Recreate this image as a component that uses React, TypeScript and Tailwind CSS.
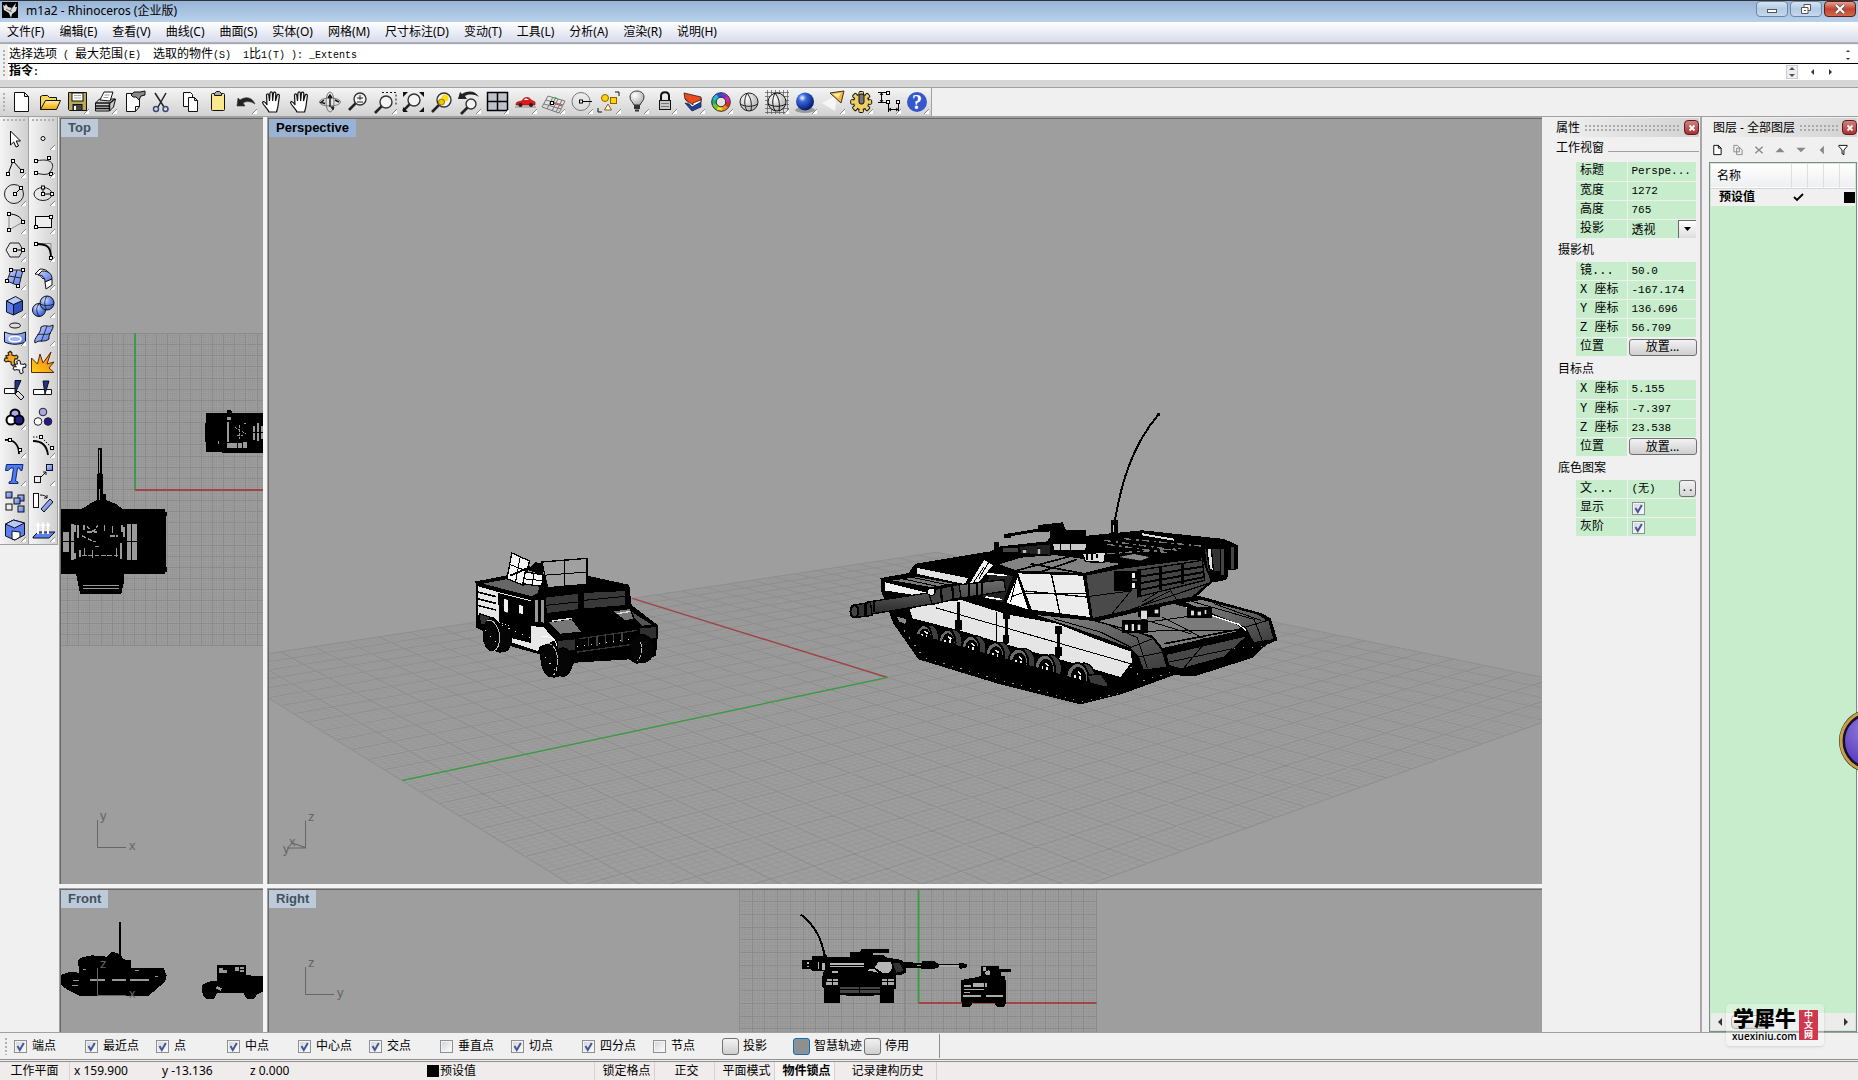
import React, { useState } from "react";

type Pt = { x: number; y: number };

/* ---------- small shared drawing pieces ---------- */

const Node = ({ x, y }: Pt) => (
  <rect x={x - 1.5} y={y - 1.5} width="3" height="3" fill="#fff" stroke="#000" strokeWidth="1" />
);

const Flyout = () => (
  <g>
    <path d="M26 21v5h-5z" fill="#fff" />
    <path d="M26 21l-5 5" stroke="#8a8a8a" strokeWidth="1" />
  </g>
);

const Defs = () => (
  <svg className="absolute size-0" aria-hidden="true">
    <defs>
      <linearGradient id="blue" x1="0" y1="0" x2="1" y2="1">
        <stop offset="0" stopColor="#c3d3ff" />
        <stop offset="1" stopColor="#4f72e8" />
      </linearGradient>
      <radialGradient id="ball" cx=".35" cy=".3" r=".8">
        <stop offset="0" stopColor="#dfe8ff" />
        <stop offset=".4" stopColor="#7d9cf5" />
        <stop offset="1" stopColor="#2c4fc0" />
      </radialGradient>
      <radialGradient id="navy" cx=".35" cy=".3" r=".7">
        <stop offset="0" stopColor="#fff" />
        <stop offset=".3" stopColor="#3a6be0" />
        <stop offset="1" stopColor="#031a70" />
      </radialGradient>
      <radialGradient id="glass" cx=".35" cy=".3" r=".8">
        <stop offset="0" stopColor="#fff" />
        <stop offset="1" stopColor="#a9a9a9" />
      </radialGradient>
      <linearGradient id="gold" x1="0" y1="0" x2="0" y2="1">
        <stop offset="0" stopColor="#ffef9c" />
        <stop offset="1" stopColor="#f2a400" />
      </linearGradient>
      <linearGradient id="flame" x1="1" y1="0" x2="0" y2="1">
        <stop offset="0" stopColor="#f07010" />
        <stop offset="1" stopColor="#ffd21a" />
      </linearGradient>
      <linearGradient id="barrel" x1="0" y1="0" x2="0" y2="1">
        <stop offset="0" stopColor="#6e6e6e" />
        <stop offset="1" stopColor="#2a2a2a" />
      </linearGradient>
      <linearGradient id="fender" x1="0" y1="0" x2="1" y2="1">
        <stop offset="0" stopColor="#8a8a8a" />
        <stop offset="1" stopColor="#3b3b3b" />
      </linearGradient>
      <radialGradient id="orb" cx=".4" cy=".3" r=".8">
        <stop offset="0" stopColor="#8f7bd8" />
        <stop offset="1" stopColor="#4a2cb8" />
      </radialGradient>
    </defs>
  </svg>
);

const K = "#111";
const Hand = (
  <path
    d="M10 24C9 21 4 17 3.5 14.500c.5-1.500 2.500-1 4 1.500L8 17 7.500 7c.3-1.500 2-1.500 2.300 0l.7 6L11 5c.3-1.500 2.200-1.500 2.400 0l.2 8 .9-8c.4-1.400 2.200-1.200 2.300.2L16.500 13l1.700-6c.6-1.200 2.300-.7 2.200.7L19 18c-.5 3-1 4-1.500 6z"
    fill="#fff"
    stroke={K}
    strokeWidth="1.200"
  />
);
const lens = (cx: number, cy: number, r: number, fill = "#f4f4f4") => (
  <g>
    <path d={`M${cx - r * 0.7} ${cy + r * 0.7}L${cx - r - 5} ${cy + r + 5}`} stroke="#222" strokeWidth="2.600" />
    <circle cx={cx} cy={cy} r={r} fill={fill} stroke="#333" strokeWidth="1.400" />
  </g>
);

type Tool = { name: string; fly?: boolean; art: React.ReactNode };

const teeth = [0, 45, 90, 135, 180, 225, 270, 315];

const topTools: Tool[] = [
  { name: "新建", art: <path d="M7.500 4.500h10l4 4v15h-14zM17.500 4.500v4h4" fill="#fff" stroke={K} /> },
  {
    name: "打开",
    art: (
      <g stroke={K}>
        <path d="M5.500 21.500V8.500l2-1h5l2 2h7v4" fill="#f6d75e" />
        <path d="M5.500 21.500l5-9h15l-4 9z" fill="url(#gold)" />
      </g>
    ),
  },
  {
    name: "保存",
    fly: true,
    art: (
      <g stroke={K}>
        <path d="M5.500 4.500h18v18h-17l-1-1z" fill="#b9a955" />
        <rect x="9" y="5" width="11" height="8" fill="#fff" />
        <path d="M11 7.500h7M11 10h7" stroke="#aaa" />
        <rect x="10" y="16.500" width="9" height="6" fill="#444" />
        <path d="M12 18v4" stroke="#fff" strokeWidth="2" />
      </g>
    ),
  },
  {
    name: "打印",
    fly: true,
    art: (
      <g stroke={K}>
        <path d="M4.500 15l4-4h16l-2 8-4 4h-14z" fill="#ccc" />
        <path d="M9 12l4-8h9l-3 9z" fill="#fff" />
        <path d="M4.500 15h14v8M5 18h13M5 20.500h13M19 15l5-4" fill="none" strokeWidth="1.500" />
        <path d="M13.500 7h5M12.500 9.500h5" stroke="#999" />
      </g>
    ),
  },
  {
    name: "文件属性",
    art: (
      <g stroke={K}>
        <path d="M7.500 5.500h13v13l-4 5h-9zM16.500 23.500v-5h4" fill="#fff" />
        <path d="M12 7l3-3h6l5-1v4l-4 1-2 4-3-3h-3z" fill="#8a8a8a" />
      </g>
    ),
  },
  {
    name: "剪切",
    art: (
      <g fill="none" stroke="#222" strokeWidth="1.500">
        <path d="M8 5l9 14M19 5l-8 14" />
        <circle cx="9" cy="21" r="2.500" stroke="#3d4878" />
        <circle cx="18.500" cy="21" r="2.500" stroke="#3d4878" />
      </g>
    ),
  },
  {
    name: "复制",
    art: (
      <g fill="#fff" stroke={K}>
        <path d="M8.500 4.500h7l2 2v12h-9z" />
        <path d="M13.500 9.500h6l3 3v11h-9zM19.500 9.500v3h3" />
      </g>
    ),
  },
  {
    name: "粘贴",
    art: (
      <g stroke={K}>
        <rect x="8.500" y="5.500" width="13" height="17" rx="1" fill="#fae98c" />
        <path d="M11.500 7.500v-2l2-2h3l2 2v2z" fill="#aaa" />
      </g>
    ),
  },
  { name: "撤销", fly: true, art: <path d="M6 18l1-8 2 2c6-4 12-3 15 4-5-3-8-3-12-1l2 3z" fill="#222" stroke="#333" strokeWidth=".6" /> },
  { name: "平移", art: Hand },
  { name: "平移视图", art: Hand },
  {
    name: "旋转视图",
    art: (
      <g fill="none" stroke="#777" strokeWidth="1">
        <ellipse cx="15" cy="14" rx="10.500" ry="4" />
        <ellipse cx="15" cy="14" rx="4" ry="10" />
        <path d="M15 8v11M13 10l2-3 2 3M9 12l-3 2.500 4 1M20 12l4 2" stroke="#111" strokeWidth="1.400" />
        <path d="M16 19l3 0-1 3z" fill="#222" stroke="#222" />
      </g>
    ),
  },
  { name: "动态缩放", art: <g>{lens(17, 11, 6)}<path d="M14 10h6M17 7v5M14 14h6" stroke="#222" /></g> },
  { name: "框选缩放", fly: true, art: <g>{lens(15, 14, 6)}<path d="M11 4.500h14v13" fill="none" stroke="#111" strokeDasharray="2 2" /></g> },
  {
    name: "缩放至范围",
    art: <g>{lens(15, 12, 6)}<path d="M4 4h5l-5 5zM25 4h-5l5 5zM4 24v-5l5 5zM25 24v-5l-5 5z" fill="#111" /></g>,
  },
  { name: "缩放选取物件", art: <g>{lens(17, 12, 7)}<circle cx="18" cy="10" r="3.500" fill="#ffdb10" /><circle cx="14.500" cy="14" r="3" fill="#f4c600" stroke="#967800" /></g> },
  { name: "复原视图", fly: true, art: <g>{lens(16, 16, 5)}<path d="M3 11l2-7 2 2c7-4 13-3 17 3-5-3-10-3-14-1l2 3z" fill="#222" /></g> },
  { name: "四个视图", fly: true, art: <path d="M4.500 4.500h20v18h-20zM14.500 4.500v18M4.500 13.500h20" fill="#bfc1cb" stroke="#000" strokeWidth="1.500" /> },
  {
    name: "右视图",
    fly: true,
    art: (
      <g>
        <path d="M4 19h21" stroke="#888" />
        <path d="M5 17c0-4 3-3 6-4 2-5 8-4 9-1l4 2v3z" fill="#e01818" stroke="#9c0d0d" strokeWidth=".7" />
        <path d="M13 12c1-2 3-2 5 0z" fill="#fff" />
        <circle cx="9.500" cy="17" r="2" fill="#222" /><circle cx="20" cy="17" r="2" fill="#222" />
      </g>
    ),
  },
  {
    name: "工作平面",
    fly: true,
    art: (
      <g stroke="#777" fill="none">
        <path d="M9 8l17 5-6 12-17-6zM14 9l-6 12M19 11l-6 12M23 12l-6 12M7 12l17 5M5 16l17 5" />
        <path d="M14 15l3-6" stroke="#1ba51b" /><path d="M14 15l9 3" stroke="#d33" /><Node x={13} y={15} />
      </g>
    ),
  },
  { name: "设置点", fly: true, art: <g fill="none"><circle cx="14" cy="13.500" r="9" stroke="#777" /><path d="M14 13.500h11" stroke="#000" /><Node x={14} y={13.5} /></g> },
  {
    name: "选取",
    fly: true,
    art: (
      <g stroke="#8a6400">
        <circle cx="10" cy="10" r="3.500" fill="#ffd400" /><rect x="15.500" y="9.500" width="6" height="6" fill="#ffd400" />
        <path d="M13 16l3.500 6h-7z" fill="#fff" /><path d="M20 4h4v4M3 20v4h4" fill="none" stroke="#111" />
      </g>
    ),
  },
  {
    name: "隐藏",
    fly: true,
    art: (
      <g stroke="#333">
        <path d="M11 17c-1-3-4-4-4-8 0-8 14-8 14 0 0 4-3 5-4 8z" fill="url(#glass)" />
        <path d="M11 18h6M11 20h6M12 22.500h4" strokeWidth="2" />
      </g>
    ),
  },
  {
    name: "锁定",
    fly: true,
    art: (
      <g stroke={K}>
        <path d="M10 13V8c0-5 8-5 8 0v5" fill="none" strokeWidth="2" />
        <rect x="8.500" y="12.500" width="11" height="9" fill="#c8c8c8" /><path d="M10 15.500h8M10 18.500h8" stroke="#777" />
      </g>
    ),
  },
  {
    name: "图层",
    fly: true,
    art: (
      <g stroke="#222" strokeWidth=".8">
        <path d="M6 15l7 8 9-4v-8l-9 6z" fill="#1d3fa8" /><path d="M6 11l7 8 9-5v-4l-9 5z" fill="#fff" />
        <path d="M5 5l17 4v3l-8 3v2l-8-6z" fill="#ef4a1b" />
      </g>
    ),
  },
  {
    name: "物件颜色",
    fly: true,
    art: (
      <g fill="none" strokeWidth="4">
        {["#e62222", "#f58a12", "#f2dd12", "#74c91b", "#1fae75", "#1abce0", "#2352dd", "#8b22cc", "#e01fa4"].map((c, i) => (
          <circle key={c} cx="14" cy="14" r="7" stroke={c} pathLength="90" strokeDasharray="10.500 79.500" strokeDashoffset={-i * 10} />
        ))}
        <circle cx="14" cy="14" r="9.300" stroke="#222" strokeWidth="1" /><circle cx="14" cy="14" r="4.800" stroke="#222" strokeWidth="1" />
      </g>
    ),
  },
  {
    name: "着色",
    art: (
      <g stroke="#222" fill="none">
        <circle cx="14" cy="14" r="9" fill="url(#glass)" /><path d="M12 5c-3 6-3 12 0 18M5 16c5 3 13 3 18 0M12 5c4 5 5 10 4 18" />
      </g>
    ),
  },
  {
    name: "着色全部",
    fly: true,
    art: (
      <g stroke="#555" fill="none">
        <path d="M2 4.500h24M2 8.500h24M2 12.500h24M2 16.500h24M2 20.500h24M2 24.500h24M4.500 2v24M8.500 2v24M12.500 2v24M16.500 2v24M20.500 2v24M24.500 2v24" strokeWidth=".7" />
        <circle cx="14" cy="14" r="9" fill="url(#glass)" stroke="#111" /><path d="M12 5c-3 6-3 12 0 18M5 16c5 3 13 3 18 0M12 5c4 5 5 10 4 18" stroke="#111" />
      </g>
    ),
  },
  { name: "渲染", fly: true, art: <g><ellipse cx="14" cy="22" rx="10" ry="3" fill="#999" /><circle cx="14" cy="13.500" r="9" fill="url(#navy)" /></g> },
  { name: "灯光", fly: true, art: <g><path d="M18 7L3 15l13 8z" fill="#fff" opacity=".7" /><path d="M11 5l14-2-3 12z" fill="#ffb52e" stroke="#333" /><path d="M14 6l8-1-3 5z" fill="#fff2b0" /></g> },
  {
    name: "选项",
    fly: true,
    art: (
      <g stroke="#111">
        {teeth.map((a) => <rect key={a} x="12" y="3.500" width="4.500" height="5" rx="1" fill="#efcf63" transform={`rotate(${a} 14.200 14)`} />)}
        <circle cx="14.200" cy="14" r="8" fill="#111" stroke="none" />
        {teeth.map((a) => <rect key={a} x="12.700" y="4.500" width="3" height="5" fill="#efcf63" stroke="none" transform={`rotate(${a} 14.200 14)`} />)}
        <circle cx="14.200" cy="14" r="7.200" fill="#efcf63" stroke="none" />
        <rect x="12" y="6" width="5" height="10" rx="2" fill="#777" />
      </g>
    ),
  },
  {
    name: "尺寸",
    fly: true,
    art: (
      <g fill="none" stroke="#000">
        <path d="M3 4.500h10M3 14.500h10M6.500 5v9M13.500 14v10M23.500 14v10M14 21.500h9M5 7l1.500-2L8 7M5 12l1.500 2L8 12M16 20l-2 1.500 2 1.500M21 20l2 1.500-2 1.500" />
        <Node x={13} y={5} /><Node x={13} y={14} /><Node x={23} y={14} />
      </g>
    ),
  },
  {
    name: "帮助",
    fly: true,
    art: (
      <g>
        <circle cx="14" cy="14" r="10" fill="#3557cc" />
        <text x="14" y="21" textAnchor="middle" fontSize="20" fontWeight="bold" fill="#fff" fontFamily="Liberation Serif, serif">?</text>
      </g>
    ),
  },
];

const puzzle = "M5 9l4-1-1-3 3-2 2 2v3l4 1 2-1 2 2-1 3-3 0-1 4 1 3-3 2-2-2v-3l-4-1-3 1-2-2 1-3 3 0z";

const leftA: Tool[] = [
  { name: "取消选取", art: <path d="M10.500 7v14l3.200-3 2.300 5 2.500-1-2.300-5h4.300z" fill="#fff" stroke="#000" /> },
  { name: "多重直线", fly: true, art: <g stroke="#000"><path d="M8 22l5-13 9 10" fill="none" /><Node x={8} y={22} /><Node x={13} y={9} /><Node x={22} y={19} /></g> },
  { name: "圆", fly: true, art: <g><circle cx="14" cy="14" r="9.500" fill="none" stroke="#222" /><path d="M15 14l6-6" stroke="#000" /><Node x={15} y={14} /><Node x={21} y={8} /></g> },
  { name: "圆弧", fly: true, art: <g fill="none"><path d="M9 22V6M9 22l14-8" stroke="#888" /><path d="M9 6c7 0 12 3 14 8" stroke="#000" /><Node x={9} y={6} /><Node x={9} y={22} /><Node x={23} y={14} /></g> },
  { name: "多边形", fly: true, art: <g><path d="M6 14l4-7h9l4 7-4 7h-9z" fill="none" stroke="#222" /><path d="M15 14h8" stroke="#000" /><Node x={15} y={14} /><Node x={23} y={14} /></g> },
  { name: "曲面", fly: true, art: <g stroke="#222"><path d="M11 6l12 0-4 16-12-5z" fill="url(#blue)" /><path d="M17 6l-4 14M9 12l12 2" /><Node x={11} y={6} /><Node x={23} y={6} /><Node x={7} y={17} /><Node x={18} y={22} /></g> },
  { name: "立方体", fly: true, art: <g stroke="#111"><path d="M6.500 9l7 3.500V23l-7-3z" fill="#5c80f2" /><path d="M13.500 12.500l9-4v10l-9 4.500z" fill="#2f50bd" /><path d="M6.500 9l9-4.500 7 4-9 4z" fill="#b5c8ff" /></g> },
  { name: "从物件建立曲线", fly: true, art: <g stroke="#111"><ellipse cx="15" cy="5.500" rx="5.500" ry="2.500" fill="#ddd" /><path d="M4.500 12c7 3 14 3 21 0v10c-7 3-14 3-21 0z" fill="url(#blue)" /><ellipse cx="15" cy="19" rx="6" ry="2.800" fill="#9fb7ff" stroke="#fff" strokeWidth="1.500" /></g> },
  { name: "组合", art: <g strokeWidth="1.500" stroke="#222"><path d={puzzle} fill="#fff" transform="translate(11 10) scale(.72)" /><path d={puzzle} fill="#f7a81b" transform="translate(2 1) scale(.76)" /></g> },
  { name: "修剪", art: <g stroke="#111"><path d="M4.500 12.500h12v5h-12z" fill="#fff" /><path d="M15 4.500h6l-6 13z" fill="#1b348c" /><path d="M15 18l3-3 6 6-3 3z" fill="#ddd" /></g> },
  { name: "群组", fly: true, art: <g stroke="#000" strokeWidth="2"><circle cx="15" cy="10" r="4.500" fill="#aaa6f0" /><circle cx="11" cy="16" r="4.500" fill="#fff" /><circle cx="19" cy="16" r="4.500" fill="#201c87" /></g> },
  { name: "编辑点", fly: true, art: <g><path d="M5 8c9-1 14 5 14 14" fill="none" stroke="#000" strokeWidth="1.800" /><Node x={10} y={8} /><Node x={20} y={18} /></g> },
  { name: "文字", fly: true, art: <path d="M6.500 4.500h16.500l-1 6h-1.500l-1-2.500h-2l-2 13 2.500 1v1.500h-9V22l2.500-1 2-13h-2.500L8 10.500H5.500z" fill="#4f7bee" stroke="#102878" /> },
  { name: "阵列", art: <g stroke="#111" fill="url(#blue)"><rect x="6" y="4" width="6" height="6" /><rect x="18" y="7" width="6" height="6" /><rect x="14" y="10" width="6" height="6" /><rect x="18" y="18" width="6" height="6" /><rect x="6" y="16" width="6" height="6" fill="#eee" /></g> },
  { name: "实体编辑", fly: true, art: <g stroke="#111"><path d="M5.500 8l8-4 11 3v12l-10 5-9-4z" fill="#5c80f2" /><path d="M5.500 8l8-4 11 3-10 5z" fill="#b5c8ff" /><path d="M12 15l8 1v5l-5 3-3-1z" fill="#fff" /></g> },
];

const leftB: Tool[] = [
  { name: "点", fly: true, art: <circle cx="14" cy="14.500" r="2" fill="#fff" stroke="#000" /> },
  { name: "曲线", fly: true, art: <g><path d="M7 9c17-4 21 5 12 13-4 1-8 0-12-1" fill="none" stroke="#222" /><Node x={7} y={9} /><Node x={7} y={21} /><Node x={20} y={6} /><Node x={22} y={22} /></g> },
  { name: "椭圆", fly: true, art: <g><ellipse cx="14" cy="14" rx="9" ry="6.500" fill="none" stroke="#222" /><path d="M14 14h9M14 14V8" stroke="#000" /><Node x={14} y={14} /><Node x={14} y={7.5} /><Node x={23} y={14} /></g> },
  { name: "矩形", fly: true, art: <g><rect x="6.500" y="8.500" width="16" height="11" fill="#eee" stroke="#000" /><Node x={22} y={9} /><Node x={7} y={19} /></g> },
  { name: "圆角", fly: true, art: <g fill="none"><path d="M7 7.500h15v15" stroke="#888" /><path d="M7 8c12 0 15 3 15 15" stroke="#000" strokeWidth="1.800" /><Node x={7} y={8} /><Node x={22} y={22} /></g> },
  { name: "曲面圆角", fly: true, art: <g stroke="#111"><path d="M6 10l5-5c4 0 7 1 9 4l-6 6c-2-3-4-5-8-5z" fill="#fff" /><path d="M13 7c7 0 10 3 10 8l-7 3c0-5-3-7-7-7z" fill="url(#blue)" /><path d="M16 18l7-3v6l-6 4z" fill="#fff" /></g> },
  { name: "布尔运算", fly: true, art: <g stroke="#111"><circle cx="10" cy="18" r="6.500" fill="url(#ball)" /><circle cx="18" cy="11" r="7" fill="url(#ball)" /><path d="M18 4c-3 4-3 10 0 14M11 12c4 2 10 2 14 0M10 12c-3 3-3 8 0 12" fill="none" strokeWidth=".8" /></g> },
  { name: "网格", fly: true, art: <g stroke="#111"><path d="M12 7c5-3 7 1 12-2 1 5-5 8-4 14-5 4-9 0-14 4-2-5 6-9 6-16z" fill="url(#blue)" /><path d="M8 15c5-2 8 1 14-2M18 6l-6 16" fill="none" strokeWidth=".8" /></g> },
  { name: "炸开", art: <path d="M2.500 24.500V10l6 6L11 6l3 9 8-11-4 12 7-2-5 6 5 4.500z" fill="url(#flame)" stroke="#5b2c00" /> },
  { name: "分割", art: <g stroke="#111"><path d="M4.500 13.500h18v5h-18z" fill="#fff" /><path d="M14 5h6l-4 13z" fill="#1b348c" /></g> },
  { name: "解散群组", art: <g stroke="#222"><circle cx="14" cy="8" r="3.800" fill="#aaa6f0" /><circle cx="9" cy="17.500" r="3.800" fill="#fff" /><circle cx="19" cy="17.500" r="3.800" fill="#201c87" /></g> },
  { name: "控制点", fly: true, art: <g fill="none"><path d="M4 5h8l12 12" stroke="#000" strokeDasharray="1.500 1.500" /><path d="M4 9c10 0 14 5 15 14" stroke="#000" strokeWidth="1.800" /><Node x={12} y={5} /><Node x={23} y={16} /></g> },
  { name: "移动", fly: true, art: <g stroke="#111"><path d="M12 17l5-5M14 12h3v3" fill="none" /><rect x="5.500" y="16.500" width="6" height="6" fill="#eee" /><rect x="17.500" y="4.500" width="6" height="6" fill="url(#blue)" /></g> },
  { name: "对齐", art: <g stroke="#111"><rect x="4.500" y="5.500" width="5" height="14" fill="#fff" /><path d="M12 21l9-10 3 3-9 10z" fill="url(#blue)" /><path d="M11 7c4 0 6 1 7 3M15 10h3v-3" fill="none" /></g> },
  { name: "分析方向", fly: true, art: <g><path d="M4 21l5-5h17l-6 6H4z" fill="#5c80f2" stroke="#111" /><path d="M9 18V9M14 18V9M19 18V9" stroke="#fff" strokeWidth="2" /><path d="M6.500 10L9 6l2.500 4zM11.500 10L14 6l2.500 4zM16.500 10L19 6l2.500 4z" fill="#fff" /></g> },
];

const ToolButton = ({ tool }: { tool: Tool }) => (
  <button type="button" aria-label={tool.name} className="size-7 shrink-0 hover:bg-white/60">
    <svg viewBox="0 0 28 28" className="block size-7">
      {tool.art}
      {tool.fly && <Flyout />}
    </svg>
  </button>
);

/* ---------- viewports ---------- */

const flatGrid = (cx: number, cy: number, half: number, major: boolean) => {
  let d = "";
  for (let i = -70; i <= 70; i++) {
    if ((i % 5 === 0) !== major) continue;
    const o = Math.round((i * half) / 70);
    d += `M${cx + o + 0.5} ${cy - half}V${cy + half}M${cx - half} ${cy + o + 0.5}H${cx + half}`;
  }
  return d;
};

const FlatGrid = ({ cx, cy, half }: { cx: number; cy: number; half: number }) => (
  <g fill="none" strokeWidth="1" shapeRendering="crispEdges">
    <path d={flatGrid(cx, cy, half, false)} stroke="#979797" />
    <path d={flatGrid(cx, cy, half, true)} stroke="#8b8b8b" />
  </g>
);

/* maps a construction-plane point (-1..1) to the perspective view */
const project = (u: number, v: number) => {
  const w = 0.2419 * u - 0.2012 * v + 1;
  return `${((-102.1 * u - 565.9 * v + 887) / w).toFixed(1)} ${((65.7 * u - 53.9 * v + 677) / w).toFixed(1)}`;
};
const planeGrid = (major: boolean) => {
  let d = "";
  for (let i = -70; i <= 70; i++) {
    if ((i % 5 === 0) !== major) continue;
    const t = i / 70;
    d += `M${project(t, -1)}L${project(t, 1)}M${project(-1, t)}L${project(1, t)}`;
  }
  return d;
};

const Axes = ({ x, y, up, side }: { x: number; y: number; up: string; side: string }) => (
  <g fontFamily="Liberation Sans, sans-serif" fontSize="13" fill="#666">
    <path d={`M${x + 0.5} ${y - 27}V${y + 0.5}H${x + 29}`} fill="none" stroke="#666" />
    <text x={x + 3} y={y - 27}>{up}</text>
    <text x={x + 32} y={y + 3}>{side}</text>
  </g>
);

const Humvee = () => (
  <g transform="translate(460 530) scale(.33333)" stroke="#000" strokeWidth="4" shapeRendering="crispEdges">
    <path d="M48 155L140 137 390 140 505 165 512 225 590 285V322L585 375 530 398 505 385 340 395 325 430 280 440 245 400 240 370 150 345 120 365 90 355 70 300 50 290z" fill="#000" />
    <path d="M60 160L150 142 240 165 235 190 215 200z" fill="#666" />
    <path d="M52 165L110 182 215 208 212 250 185 270 150 290 105 275 95 262 52 255z" fill="#e6e6e6" />
    <path d="M52 185l56 14M52 205l56 14M52 225l56 14" strokeWidth="5" />
    <path d="M115 190l95 24v90l-90-30z" fill="#000" />
    <path d="M130 204l14 4v40l-14-4zM175 222l14 4v26l-14-3z" fill="#f2f2f2" strokeWidth="2" />
    <path d="M58 250l44 14-8 20-34 0z" fill="#333" />
    <path d="M130 315L210 335 212 285 250 288 290 330 240 350 235 365 130 330z" fill="#e8e8e8" />
    <path d="M222 208l12 0v70l-12 0zM240 208l12 0v72l-12-4z" fill="#999" />
    <path d="M255 200L355 188V238L258 250zM368 186L496 180V226L370 236z" fill="#383838" />
    <path d="M255 225l98-10M370 210l125-12" strokeWidth="3" />
    <path d="M155 68L208 92 190 165 140 145z" fill="#f4f4f4" />
    <path d="M150 103L200 122M180 80l-14 75" strokeWidth="3" />
    <path d="M195 125L248 133 245 168 188 160z" fill="#f4f4f4" /><path d="M190 145l56 6M220 128l-3 36" strokeWidth="3" />
    <path d="M245 95L380 84V162L262 172z" fill="#a0a0a0" /><path d="M248 135l132-10M313 90v76" strokeWidth="3" />
    <path d="M150 136l60-26" strokeWidth="6" /><path d="M205 118l20-20 22 2v32z" fill="#000" />
    <path d="M262 275L335 265 365 305 300 312zM455 242L510 234 535 262 495 272z" fill="#777" />
    <path d="M275 272l60-8M470 250l40-7" stroke="#ddd" />
    <path d="M512 240L580 285 545 288 520 262z" fill="#555" />
    <path d="M290 330L345 325V360L290 368zM538 292L588 288V325L538 330z" fill="#303030" />
    <path d="M355 325L530 300M350 365l180-25" stroke="#333" />
    <path d="M385 320v28M410 316v30M435 312v30M460 310v28M485 306v28" stroke="#444" strokeWidth="4" />
    <ellipse cx="95" cy="312" rx="26" ry="48" fill="#050505" /><ellipse cx="130" cy="325" rx="24" ry="38" fill="#050505" />
    <ellipse cx="272" cy="388" rx="28" ry="50" fill="#050505" /><ellipse cx="308" cy="395" rx="28" ry="42" fill="#050505" /><ellipse cx="545" cy="355" rx="36" ry="42" fill="#050505" />
    <g fill="none" stroke="#bbb" strokeWidth="3">
      <path d="M80 270c20-6 38 22 38 50s-8 38-16 40" /><path d="M260 340c20-4 34 28 32 56s-8 36-14 38" strokeDasharray="16 5" /><path d="M540 335c8 20 4 45-8 56" strokeDasharray="14 5" />
      <path d="M245 320c28-4 42 6 44 26" stroke="#fff" />
    </g>
    <g stroke="#ddd" strokeWidth="3" strokeDasharray="3 19"><path d="M125 285l90 38M255 380l30 40M350 350l160-24M75 300l36 40" /></g>
  </g>
);

const wheels = [[250, 710, 24, 36], [320, 726, 25, 38], [390, 746, 27, 39], [463, 767, 28, 41], [533, 787, 30, 42], [612, 806, 31, 43], [710, 832, 33, 44]];

const Tank = () => (
  <g transform="translate(840 400) scale(.33333)" stroke="#000" strokeWidth="4" shapeRendering="crispEdges">
    <path d="M122 535L205 520 225 492 450 455 480 440 620 425 640 400 740 408 905 392 1150 418 1190 437V505L1158 508 1155 537 1112 545 1062 590 1080 590 1260 640 1288 655 1308 718 1275 732 1235 770 1060 826 1000 822 840 880 720 910 480 850 235 775 160 668 150 640 125 575z" fill="#000" />
    <path d="M228 500L385 532 375 554 228 522z" fill="#e2e2e2" />
    <path d="M145 540L230 528 350 550 270 562z" fill="#7a7a7a" /><path d="M180 534l120 26M210 530l115 24" strokeWidth="3" />
    <path d="M130 543L265 576 235 588 132 572z" fill="#efefef" />
    <path d="M205 625L300 600 365 598 500 640 650 668 760 712 872 752 876 785 840 832 655 778 500 735 350 690 215 656z" fill="#e5e5e5" />
    <path d="M285 622L870 790M468 635v90" fill="none" strokeWidth="3" />
    <g strokeWidth="9"><path d="M355 605v85M498 640v90M653 680v92" /></g>
    <g strokeWidth="20"><path d="M353 660v30M498 636v20M496 705v22M654 678v22M653 740v28" /></g>
    <path d="M570 640L760 660 860 682 935 712 962 745 980 800 908 810 893 770 870 745 760 704z" fill="url(#fender)" />
    <path d="M640 655l140 40 90 45M800 672l90 40 30 90M860 745l75-30M893 770l70-14" fill="none" strokeWidth="3" />
    <path d="M765 662L1000 608 1185 668 1210 690 965 745 935 708z" fill="#7b7b7b" />
    <path d="M920 692L1215 690M850 675L1100 640M965 650l140 72M900 655l150 45M980 760L1222 702" fill="none" strokeWidth="3" />
    <path d="M970 730L1210 684M970 745L1215 695" strokeWidth="5" />
    <path d="M975 762L1222 705 1150 770 1020 806 985 796z" fill="#474747" /><path d="M985 785L1175 745M1090 730l-60 72" strokeWidth="3" />
    <path d="M1025 604L1085 597 1250 640 1285 662 1300 718 1238 727 1215 682z" fill="url(#fender)" /><path d="M1050 602l190 55 25 65M1120 610l140 50M1215 680l65-20" fill="none" strokeWidth="3" />
    <path d="M1035 620L1195 672 1215 690" fill="none" stroke="#fff" />
    <path d="M845 662h75v34h-75zM1042 622h70v28h-70zM895 622h62v26h-62z" fill="#000" />
    <path d="M900 630h20v26h-20zM940 626h14v14h-14zM852 672h10v18h-10zM872 670h8v22h-8zM890 672h10v18h-10zM1050 630h10v16h-10zM1070 632h12v14h-12zM1090 628h8v14h-8z" fill="#ddd" strokeWidth="2" />
    <path d="M470 492L540 470 640 462 850 490 730 520 530 513z" fill="#838383" />
    <path d="M530 510L700 465M600 515l110-38M570 490l160 30" fill="none" strokeWidth="5" />
    <path d="M735 524L830 505 1085 472 1112 542 1055 590 880 627 755 655z" fill="#4a4a4a" />
    <path d="M745 588L870 572M810 645L870 572M870 627L1100 550M905 605l95-60M880 627l110-56 20 30" fill="none" strokeWidth="3" />
    <path d="M890 510L1085 480 1092 540 890 590z" fill="#444" />
    <path d="M845 490L1080 475M890 530L1090 498M890 550L1090 515M890 570L1090 530" strokeWidth="6" /><path d="M960 500v70M1025 490v62M895 505v85" strokeWidth="10" />
    <path d="M822 515h50v55h-50z" fill="#000" /><path d="M872 515h14v20h-14zM872 545h14v20h-14z" fill="#eee" />
    <path d="M530 517L728 524 750 652 572 630z" fill="#ececec" /><path d="M555 572L740 590M555 580L740 580M632 520l26 120" fill="none" strokeWidth="4" />
    <path d="M530 523L495 608 565 630z" fill="#fff" /><path d="M510 590l50-18M530 525l-20 80" strokeWidth="3" />
    <path d="M430 476L460 494 415 548 385 550z" fill="#eee" /><path d="M430 500l-30 45M445 485l-30 50" strokeWidth="3" />
    <path d="M450 515L520 525 488 608 420 590z" fill="#222" /><path d="M440 520l60 6M435 590l50 8" stroke="#fff" strokeWidth="5" />
    <path d="M75 606L260 578 355 553 490 538 495 572 370 592 268 612 92 641z" fill="url(#barrel)" />
    <path d="M262 572L355 552 362 592 275 612z" fill="#444" /><path d="M410 545v48M425 543v48M100 605v30M300 563l5 42M335 558l4 42M385 550v44" strokeWidth="7" />
    <ellipse cx="272" cy="574" rx="12" ry="11" fill="#eee" />
    <path d="M35 615L90 606 95 645 40 652z" fill="#333" /><ellipse cx="42" cy="633" rx="12" ry="18" fill="#444" strokeWidth="6" /><path d="M75 610v38" strokeWidth="10" />
    <path d="M635 430L740 428 735 450 640 452z" fill="#c9c9c9" /><path d="M660 432v18M690 432v18" strokeWidth="5" />
    <path d="M630 390h104v38H630zM595 376l70-8 8 20-80 6z" fill="#000" /><path d="M492 406l110-18" strokeWidth="9" /><path d="M490 406h22" strokeWidth="12" />
    <path d="M535 438L630 430V465L540 460z" fill="#222" /><path d="M590 445h10v16h-10zM545 448h14v10h-14z" fill="#bbb" strokeWidth="2" /><path d="M485 442h50v14h-50z" fill="#444" /><path d="M468 425v38" strokeWidth="14" />
    <path d="M725 460L795 455 790 486 735 484z" fill="#ddd" /><path d="M740 462v16M755 460v18M770 460v14" strokeWidth="5" /><path d="M760 455l70-5" strokeWidth="10" />
    <path d="M905 402L1000 418" stroke="#ddd" strokeWidth="6" />
    <path d="M830 470L880 460 930 470 900 482z" fill="#888" strokeWidth="2" />
    <g stroke="#777" strokeWidth="4" strokeDasharray="22 14 8 9"><path d="M790 420l220 30M800 432l180 25M850 415l230 22M800 460l220-15" /></g>
    <path d="M1090 445h50v70h-40z" fill="#333" /><path d="M1098 445l14 0 6 65-12-2z" fill="#e0e0e0" /><path d="M1145 445v80M1175 440v66" stroke="#444" strokeWidth="8" /><path d="M1158 445v85" strokeWidth="6" />
    <path d="M812 362h18v40h-18z" fill="#000" /><path d="M818 375v20" stroke="#ccc" /><path d="M823 360C840 260 870 140 954 42" fill="none" strokeWidth="6" /><path d="M949 44h9" strokeWidth="9" />
    {wheels.map(([x, y, rx, ry]) => (
      <g key={x}>
        <ellipse cx={x + 20} cy={y} rx={rx} ry={ry} fill="#3d3d3d" />
        <ellipse cx={x} cy={y} rx={rx} ry={ry} fill="#6a6a6a" stroke="#000" strokeWidth="6" />
        <ellipse cx={x + 3} cy={y + 2} rx={rx * 0.66} ry={ry * 0.72} fill="#000" />
        <path d={`M${x + 2} ${y - 18}l10 8M${x + 8} ${y - 6}v16M${x - 6} ${y - 8}v18M${x} ${y + 18}h10`} stroke="#eee" strokeWidth="5" />
      </g>
    ))}
    <path d="M165 645l35 10-4 18-22-8z" fill="#888" />
    <path d="M740 825l40-5 25 35-45 20z" fill="#3a3a3a" />
    <g stroke="#999" strokeWidth="3" strokeDasharray="4 23"><path d="M190 690l60 82 240 70 230 62 130-30M870 800l40 40 80-24M1180 745l90-8" /></g>
  </g>
);

const Viewport = ({ title, active, viewBox, children }: { title: string; active?: boolean; viewBox: string; children: React.ReactNode }) => (
  <section className="relative min-h-0 min-w-0 border-l border-t border-[#a0a0a0]">
    <div className="size-full overflow-hidden border-l border-t border-[#696969] bg-[#9e9e9e]">
      <svg viewBox={viewBox} preserveAspectRatio="xMinYMin slice" className="block size-full">{children}</svg>
    </div>
    <h2
      className={
        active
          ? "absolute left-px top-px h-[18px] bg-[#9ab3d4] px-[7px] font-['Liberation_Sans'] text-[13px] leading-[18px] font-bold text-black"
          : "absolute left-px top-px h-[18px] bg-[#bccad9] px-[7px] font-['Liberation_Sans'] text-[13px] leading-[18px] font-bold text-[#44515c]"
      }
    >
      {title}
    </h2>
  </section>
);

const Viewports = () => (
  <main className="grid min-h-0 min-w-0 flex-1 grid-cols-[204px_1fr] grid-rows-[1fr_144px] gap-1 bg-[#f4f4f4]">
    <Viewport title="Top" viewBox="61 119 202 765">
      <FlatGrid cx={134} cy={489} half={156} />
      <path d="M135 333V490" stroke="#3f9a47" strokeWidth="2" /><path d="M135 490H263" stroke="#a04448" strokeWidth="2" />
      <g transform="translate(50 410) scale(.33333)" shapeRendering="crispEdges">
        <path d="M33 297H95L125 278 140 270V192h4V115h11v77h4v60h9v18L200 283l18 14H345v10h6v11h-4V470h4v16h-6v5H222V515l-8 36H90L78 491H33z" />
        <path d="M40 365h17v62H40zM64 342h7v108h-7zM232 342h11v108h-11zM246 342h15v108h-15z" fill="#999" /><path d="M98 525h110v4H98zM98 534h110v3H98z" fill="#999" />
        <path d="M33 394H262" stroke="#000" strokeWidth="3" />
        <path d="M76 345v20M84 345v40M102 345v16M164 345v18M188 347v22M216 345v20M222 350v30M90 420v22M104 415v20M128 420v24M200 415v25M214 400v48M76 430v18" stroke="#999" strokeWidth="5" />
        <path d="M110 350l20 14 14-18M112 366h30M96 378l40 18M134 410h14M180 378h24M96 436h120" stroke="#999" strokeWidth="4" fill="none" strokeDasharray="14 5" />
        <path d="M148 120v70M149 236v34" stroke="#999" strokeWidth="3" />
        <path d="M468 10H530V0H543L548 10H640V128H525L468 125V95H465V40H468z" />
        <path d="M532 36h6v60h-6zM609 48h5v42h-5zM620 40h8v52h-8zM632 48h7v38h-7zM532 98h28v16h-28zM563 98h14v16h-14zM580 96h11v18h-11zM530 22h12v8h-12zM503 94h4v8h-4z" fill="#999" />
        <path d="M568 46v42M555 52l34 20M560 78h24M582 40h10" stroke="#999" strokeWidth="3" strokeDasharray="7 5" />
        <path d="M600 68H640" stroke="#000" strokeWidth="3" />
      </g>
      <Axes x={97} y={847} up="y" side="x" />
    </Viewport>
    <Viewport title="Perspective" active viewBox="269 119 1272 765">
      <g fill="none" strokeWidth="1">
        <path d={planeGrid(false)} stroke="#969696" opacity=".8" />
        <path d={planeGrid(true)} stroke="#8e8e8e" />
      </g>
      <path d="M887 677L632 598" stroke="#a04448" strokeWidth="1.500" /><path d="M887 677L402 780" stroke="#3f9a47" strokeWidth="1.500" />
      <Humvee />
      <Tank />
      <g fontFamily="Liberation Sans, sans-serif" fontSize="13" fill="#666">
        <path d="M305.500 820V847.500H287M305 847l-14-5" fill="none" stroke="#666" />
        <text x="308" y="820">z</text><text x="289" y="845">x</text><text x="283" y="852">y</text>
      </g>
    </Viewport>
    <Viewport title="Front" viewBox="61 890 202 142">
      <g transform="translate(50 880) scale(.33333)" shapeRendering="crispEdges">
        <path d="M33 285L60 276 88 278 84 243 90 234 125 226 172 230 186 214 207 222V126H213V224L220 238 242 240V264L340 264 350 285 345 305 296 347H88L40 322 33 312z" />
        <path d="M120 296h45v6h-45zM186 296h42v6h-42zM240 296h56v6h-56z" fill="#999" />
        <path d="M65 318h18M70 302h16M98 268h10M255 272h12M315 290h10" stroke="#999" strokeWidth="3" />
        <path d="M456 315L475 305 500 303 502 255H588V286L640 288V335L622 342 612 356H590L580 338H502L492 357H470L458 345z" />
        <path d="M508 264h10v14h-10zM556 262h10v12h-10zM570 262h12v5h-12zM570 271h12v5h-12zM520 271h10v8h-10z" fill="#999" /><path d="M500 318l16 8-4 6-14-6z" fill="#999" />
      </g>
      <Axes x={97} y={995} up="z" side="x" />
    </Viewport>
    <Viewport title="Right" viewBox="269 890 1272 142">
      <FlatGrid cx={917} cy={1003} half={178} />
      <path d="M918 889V1003" stroke="#3f9a47" strokeWidth="2" /><path d="M918 1003H1096" stroke="#a04448" strokeWidth="2" />
      <g transform="translate(730 880) scale(.33333)" shapeRendering="crispEdges">
        <path d="M212 104C245 130 275 170 283 232" fill="none" stroke="#000" strokeWidth="6" />
        <path d="M216 240H246V228H275L285 220 292 232H360V217H388L392 208H477V218H425L430 225H460L468 232 515 240 520 247H545L558 250H572L576 244H612L624 252H684L690 248 708 252V262L690 266 684 262H624L610 266H576L558 264H526V278L512 284H497V328H492V369H450V344L418 348H360L328 344V369H282V328L276 320V290L280 272H246L240 266H216z" />
        <path d="M300 249h102v5H300zM300 258h102v4H300zM432 262l12-16h38l4 18-10 14h-20zM408 270l20-5 18 14zM276 248h9v22h-9zM230 247h5v5h-5zM230 257h5v5h-5zM262 247h5v20h-5zM306 272h16v6h-16z" fill="#b5b5b5" />
        <path d="M290 297h32v6h-32zM288 307h34v7h-34zM456 297h34v6h-34zM456 307h34v7h-34zM558 254h14v5h-14zM624 255h60v5h-60z" fill="#aaa" />
        <path d="M328 320h122v8H328zM328 331h122v8H328z" fill="#454545" /><path d="M486 248h20l12 24-20 6z" fill="#333" /><path d="M388 318v24M472 294v24M305 294v24" stroke="#000" strokeWidth="3" />
        <path d="M690 300L735 292 752 288V258H805V266H840V276H812V288H822L825 300V372L820 381H800L792 370H725L718 381H696L690 350z" />
        <path d="M757 262h8v10h-8zM762 276l14-6 4 16h-12zM700 316h22v5h-22zM728 310h32v10h-32zM764 308h5v12h-5zM700 326h60v4h-60zM700 336h18v3h-18zM698 345h52v6h-52zM765 345h52v6h-52z" fill="#aaa" />
      </g>
      <Axes x={305} y={994} up="z" side="y" />
    </Viewport>
  </main>
);

/* ---------- chrome ---------- */

const menus = ["文件(F)", "编辑(E)", "查看(V)", "曲线(C)", "曲面(S)", "实体(O)", "网格(M)", "尺寸标注(D)", "变动(T)", "工具(L)", "分析(A)", "渲染(R)", "说明(H)"];

const winBtn = "flex h-4 items-center justify-center rounded-sm border border-[#6d86a8] bg-gradient-to-b from-[#d5e3f2] via-[#b4cbe4] to-[#c5d9ee]";

const TitleBar = () => (
  <header className="flex h-[22px] items-start border-t border-[#333] bg-gradient-to-b from-[#97b5d8] to-[#b9d0e9] pr-0.5">
    <svg viewBox="0 0 16 16" className="mt-px ml-0.5 size-4" aria-hidden="true">
      <rect width="16" height="16" fill="#000" />
      <path d="M1 3l2 1 1-2 2 3 4 1 4-5-1 4 2 0-1 4-4 3-1 4-2-5-5-3z" fill="#ddd" /><path d="M4 7l6 3M10 6l-2 3" stroke="#666" />
    </svg>
    <h1 className="ml-2 flex-1 text-[12px] leading-[20px]">m1a2 - Rhinoceros (企业版)</h1>
    <div className="flex gap-0.5">
      <button type="button" aria-label="最小化" className={winBtn + " w-8"}><svg viewBox="0 0 12 10" className="h-2.5 w-3"><rect x="1.500" y="5.500" width="9" height="3" fill="#fff" stroke="#555" /></svg></button>
      <button type="button" aria-label="还原" className={winBtn + " w-8"}><svg viewBox="0 0 12 12" className="size-3"><path d="M4 1.500h6.500v6H4z" fill="#fff" stroke="#555" /><path d="M1.500 4.500H8v6H1.500z" fill="#fff" stroke="#555" /><path d="M4 7h2v1H4z" fill="#555" /></svg></button>
      <button type="button" aria-label="关闭" className="flex h-4 w-8 items-center justify-center rounded-sm border border-[#5a1c14] bg-gradient-to-b from-[#e0a194] via-[#c1432c] to-[#d0694f]"><svg viewBox="0 0 12 10" className="h-2.5 w-3"><path d="M2 1l8 8M10 1L2 9" stroke="#555" strokeWidth="3.500" /><path d="M2 1l8 8M10 1L2 9" stroke="#fff" strokeWidth="2" /></svg></button>
    </div>
  </header>
);

const Mono = ({ children }: { children: React.ReactNode }) => <span className="font-['Liberation_Mono'] text-[10px] whitespace-pre">{children}</span>;

const Grip = () => <div className="mx-0.5 my-1 w-1 shrink-0 self-stretch bg-[radial-gradient(#b0b0b0_1px,transparent_1px)] bg-size-[4px_4px]" />;

const CommandArea = () => (
  <section className="flex border-t border-[#a9a9a9] bg-[#f0f0f0] pt-px">
    <Grip />
    <div className="min-w-0 flex-1 bg-white text-[12px] leading-4">
      <div className="flex h-[19px] items-center justify-between border-b border-black pt-px pr-1.5 pl-px">
        <p className="whitespace-pre">
          选择选项<Mono>{" ( "}</Mono>最大范围<Mono>{"(E)  "}</Mono>选取的物件<Mono>{"(S)  1"}</Mono>比<Mono>{"1(T) ): _Extents"}</Mono>
        </p>
        <svg viewBox="0 0 8 14" className="h-3.5 w-2"><path d="M2 4l2-2 2 2zM2 10l2 2 2-2z" fill="#333" /></svg>
      </div>
      <div className="flex h-4 items-center pl-px">
        <label htmlFor="cmd" className="font-bold">指令<Mono>:</Mono></label>
        <input id="cmd" className="ml-1 min-w-0 flex-1 outline-none" />
        <div className="flex items-center gap-3 pr-6">
          <svg viewBox="0 0 12 14" className="h-3.5 w-3"><rect x=".5" y=".5" width="11" height="13" fill="#eee" stroke="#ccc" /><path d="M3 5l3-3 3 3zM3 9l3 3 3-3z" fill="#456" /></svg>
          <svg viewBox="0 0 6 8" className="h-2 w-1.5"><path d="M4 1v6L1 4z" fill="#333" /></svg>
          <svg viewBox="0 0 6 8" className="h-2 w-1.5"><path d="M1 1v6l3-3z" fill="#333" /></svg>
        </div>
      </div>
    </div>
  </section>
);

const Column = ({ tools, label }: { tools: Tool[]; label: string }) => (
  <div role="toolbar" aria-label={label} className="flex w-[29px] flex-col items-center border-r border-b border-[#a0a0a0] bg-gradient-to-r from-[#f4f4f4] to-[#d0d0d0]">
    <div className="mt-px mb-px h-[5px] w-6 bg-[radial-gradient(#b0b0b0_1px,transparent_1px)] bg-size-[4px_4px]" />
    {tools.map((t) => <ToolButton key={t.name} tool={t} />)}
  </div>
);

const Check = ({ id, on }: { id: string; on: boolean }) => {
  const [v, setV] = useState(on);
  return (
    <span className="relative inline-flex size-[13px] shrink-0">
      <input id={id} type="checkbox" checked={v} onChange={() => setV(!v)} className="size-[13px] appearance-none border border-[#8e8f8f] bg-gradient-to-br from-[#cfd3d8] to-white shadow-[inset_0_0_0_1px_#f4f4f4]" />
      {v && <svg viewBox="0 0 13 13" className="pointer-events-none absolute inset-0 size-[13px]"><path d="M3.500 6l2.300 4L9.800 3" fill="none" stroke="#44579a" strokeWidth="2" /></svg>}
    </span>
  );
};

/* ---------- properties panel ---------- */

const PanelHead = ({ title }: { title: string }) => (
  <div className="flex h-[19px] items-center gap-1 bg-gradient-to-r from-[#f0f0f0] to-[#d2d2d2]">
    <h2 className="text-[12px] leading-4 whitespace-nowrap">{title}</h2>
    <div className="h-2 flex-1 bg-[radial-gradient(#aaa_1px,transparent_1px)] bg-size-[4px_4px]" />
    <button type="button" aria-label={"关闭" + title} className="flex size-[15px] items-center justify-center rounded-sm border border-[#5e1a1a] bg-gradient-to-b from-[#d08080] to-[#a83030]">
      <svg viewBox="0 0 8 8" className="size-2"><path d="M1.500 1.500l5 5M6.500 1.500l-5 5" stroke="#fff" strokeWidth="1.800" /></svg>
    </button>
  </div>
);

const place = (
  <button type="button" className="block h-[17px] w-[68px] rounded-[3px] border border-[#707070] bg-gradient-to-b from-[#f2f2f2] to-[#cfcfcf] text-[12px] leading-[14px]">放置...</button>
);

const groups: { title: string; rows: [string, React.ReactNode][] }[] = [
  {
    title: "工作视窗",
    rows: [
      ["标题", "Perspe..."],
      ["宽度", "1272"],
      ["高度", "765"],
      [
        "投影",
        <span key="p" className="relative flex">
          <select aria-label="投影" className="h-[18px] w-full appearance-none font-['Noto_Sans_CJK_SC'] text-[12px] leading-[18px]"><option>透视</option><option>平行</option></select>
          <span className="pointer-events-none absolute right-0 flex h-[18px] w-[18px] items-center justify-center border-t border-l border-[#696969] bg-gradient-to-b from-white to-[#ddd]">
            <svg viewBox="0 0 7 4" className="h-1 w-[7px]"><path d="M0 0h7L3.500 4z" /></svg>
          </span>
        </span>,
      ],
    ],
  },
  { title: "摄影机", rows: [["镜...", "50.0"], ["X 座标", "-167.174"], ["Y 座标", "136.696"], ["Z 座标", "56.709"], ["位置", place]] },
  { title: "目标点", rows: [["X 座标", "5.155"], ["Y 座标", "-7.397"], ["Z 座标", "23.538"], ["位置", place]] },
  {
    title: "底色图案",
    rows: [
      [
        "文...",
        <span key="f" className="flex justify-between">(无)<button type="button" aria-label="浏览文件" className="h-[17px] w-[17px] rounded-[3px] border border-[#707070] bg-gradient-to-b from-[#f2f2f2] to-[#d5d5d5] leading-[12px]">..</button></span>,
      ],
      ["显示", <Check key="c1" id="显示" on />],
      ["灰阶", <Check key="c2" id="灰阶" on />],
    ],
  },
];

const Properties = () => (
  <aside className="w-[160px] shrink-0 border-r-2 border-[#a8a8a8] bg-[#f0f0f0] pt-px pr-px pl-3.5">
    <PanelHead title="属性" />
    {groups.map((g, i) => (
      <section key={g.title}>
        <h3 className={i === 0 ? "mb-1 flex h-[21px] items-center gap-1 text-[12px] leading-4 after:mt-2 after:h-px after:flex-1 after:bg-[#a0a0a0]" : "flex h-[23px] items-center pl-0.5 text-[12px] leading-4"}>{g.title}</h3>
        <table className="ml-5 w-[120px] table-fixed border-collapse">
          <tbody>
            {g.rows.map(([k, v], j) => {
              const isPlace = v === place;
              const isCheck = k === "显示" || k === "灰阶";
              return (
                <tr key={j} className="h-[19px] border-b border-[#f0f0f0]">
                  <th scope="row" className="w-[51px] border-r border-[#f0f0f0] bg-[#c7edcc] p-0 pl-1 text-left font-['Liberation_Mono','Noto_Sans_CJK_SC'] text-[12px] leading-[18px] font-normal whitespace-nowrap">
                    {isCheck ? <label htmlFor={k}>{k}</label> : k}
                  </th>
                  <td className={isPlace ? "p-0 pl-px" : "bg-[#c7edcc] p-0 pl-1 font-['Liberation_Mono','Noto_Sans_CJK_SC'] text-[11px] leading-[18px]"}>
                    {isCheck ? <span className="flex items-center">{v}</span> : v}
                  </td>
                </tr>
              );
            })}
          </tbody>
        </table>
      </section>
    ))}
  </aside>
);

/* ---------- layers panel ---------- */

const layerTools: [string, React.ReactNode][] = [
  ["新图层", <path key="a" d="M2.500 1.500h5l3 3v7h-8zM7.500 1.500v3h3" fill="#fff" stroke="#000" />],
  ["复制图层", <path key="b" d="M1.500 1.500h4l2 2v5h-6zM4.500 4.500h4l2 2v5h-6z" fill="#f0f0f0" stroke="#888" />],
  ["删除", <path key="c" d="M2 3l8 7M10 3l-8 7" stroke="#888" strokeWidth="1.500" />],
  ["上移", <path key="d" d="M1 9l5-5 5 5z" fill="#888" />],
  ["下移", <path key="e" d="M1 4l5 5 5-5z" fill="#888" />],
  ["上一级", <path key="f" d="M8 2v9L3.500 6.500z" fill="#888" />],
  ["过滤器", <path key="g" d="M1.500 1.500h9v1l-3.500 4v5l-2-1v-4l-3.500-4z" fill="#fff" stroke="#000" />],
];

const Layers = () => (
  <aside className="flex w-[156px] shrink-0 flex-col bg-[#f0f0f0] pt-px pr-px pl-[7px]">
    <div className="pl-1"><PanelHead title="图层 - 全部图层" /></div>
    <div className="flex h-[25px] items-center gap-[9px] pl-0.5">
      {layerTools.map(([n, art]) => (
        <button key={n} type="button" aria-label={n} className="size-3"><svg viewBox="0 0 12 13" className="size-3">{art}</svg></button>
      ))}
    </div>
    <div className="flex flex-1 flex-col border border-[#828790] bg-[#c7edcc] p-px">
      <table className="w-full table-fixed border-collapse text-[12px]">
        <thead>
          <tr className="h-6 border-b border-[#d5d5d5] bg-gradient-to-b from-white to-[#eeeff1]">
            <th className="w-[80px] border-r border-[#dedfe0] p-0 pl-1.5 text-left font-normal">名称</th>
            <th className="border-r border-[#dedfe0] p-0" /><th className="border-r border-[#dedfe0] p-0" /><th className="border-r border-[#dedfe0] p-0" /><th className="p-0" />
          </tr>
        </thead>
        <tbody>
          <tr className="h-[18px] bg-[#f0f0f0]">
            <td className="p-0 pl-2 leading-4 font-bold">预设值</td>
            <td className="p-0"><svg viewBox="0 0 12 10" className="ml-0.5 h-2.5 w-3"><path d="M1 5l3 3L10 2" fill="none" stroke="#000" strokeWidth="1.800" /></svg></td>
            <td className="p-0" /><td className="p-0" />
            <td className="p-0"><span className="ml-auto block size-[11px] bg-black" /></td>
          </tr>
        </tbody>
      </table>
      <div className="mt-auto flex h-[17px] items-center justify-between bg-[#ececec] px-1.5">
        <svg viewBox="0 0 6 8" className="h-2 w-1.5"><path d="M5 0v8L1 4z" fill="#333" /></svg>
        <div className="mr-auto ml-2 h-3.5 w-9 rounded-sm border border-[#999] bg-gradient-to-b from-white to-[#ccc]" />
        <svg viewBox="0 0 6 8" className="h-2 w-1.5"><path d="M1 0v8l4-4z" fill="#333" /></svg>
      </div>
    </div>
  </aside>
);

/* ---------- bottom bars ---------- */

const snaps: [string, boolean][] = [["端点", true], ["最近点", true], ["点", true], ["中点", true], ["中心点", true], ["交点", true], ["垂直点", false], ["切点", true], ["四分点", true], ["节点", false]];
const modes: [string, boolean][] = [["投影", false], ["智慧轨迹", true], ["停用", false]];

const SnapBar = () => (
  <div className="flex h-[27px] items-center border-b border-[#8f8f8f] bg-[#f0f0f0] text-[12px]">
    <div className="w-3.5 self-stretch py-1 pl-1"><div className="size-full max-w-1 bg-[radial-gradient(#b0b0b0_1px,transparent_1px)] bg-size-[4px_4px]" /></div>
    {snaps.map(([n, on]) => (
      <div key={n} className="flex w-[71px] shrink-0 items-center"><Check id={"snap-" + n} on={on} /><label htmlFor={"snap-" + n} className="ml-[5px] leading-4 whitespace-nowrap">{n}</label></div>
    ))}
    <div className="-ml-0.5 flex h-6 items-center border-r border-[#8f8f8f] pr-1">
      {modes.map(([n, on]) => (
        <div key={n} className="flex w-[71px] items-center">
          <button type="button" id={"mode-" + n} aria-pressed={on} aria-label={n} className={on ? "size-[17px] shrink-0 rounded-[3px] border border-[#2c628b] bg-[#8f8f8f] shadow-[inset_0_0_0_1px_#6aa0c8]" : "size-[17px] shrink-0 rounded-[3px] border border-[#707070] bg-gradient-to-b from-[#f2f2f2] to-[#cfcfcf]"} />
          <label htmlFor={"mode-" + n} className="ml-1 leading-4 whitespace-nowrap">{n}</label>
        </div>
      ))}
    </div>
  </div>
);

const pane = "flex h-full items-center justify-center border-r border-[#d7d0cf] whitespace-nowrap";

const StatusBar = () => (
  <footer className="mt-px flex h-[19px] items-center border-t border-[#8f8f8f] bg-[#f0eceb] text-[12px] leading-4">
    <button type="button" className={pane + " w-[70px]"}>工作平面</button>
    <span className="w-[88px] pl-1">x 159.900</span>
    <span className="w-[88px] pl-1">y -13.136</span>
    <span className="w-[177px] pl-1">z 0.000</span>
    <button type="button" className={pane + " w-[172px] !justify-start gap-px pl-1"}><span className="size-3 bg-black" />预设值</button>
    <button type="button" className={pane + " w-[60px] pl-1"}>锁定格点</button>
    <button type="button" className={pane + " w-[60px] pl-1"}>正交</button>
    <button type="button" className={pane + " w-[60px] pl-1"}>平面模式</button>
    <button type="button" className={pane + " w-[60px] bg-[#f6f4f3] pl-1 font-bold"}>物件锁点</button>
    <button type="button" className={pane + " w-[102px] pl-1"}>记录建构历史</button>
  </footer>
);

export default function App() {
  return (
    <div className="relative flex h-screen min-h-[640px] flex-col overflow-hidden bg-[#f0f0f0] font-['Noto_Sans','Noto_Sans_CJK_SC',sans-serif] text-black">
      <Defs />
      <TitleBar />
      <nav className="flex h-[21px] items-center gap-[15px] border-b border-[#b0b0b8] bg-gradient-to-b from-white to-[#d8dcec] pl-[7px] text-[12px]">
        {menus.map((m) => <button key={m} type="button" className="leading-4">{m}</button>)}
      </nav>
      <CommandArea />
      <div className="h-2 border-b border-[#a0a0a0] bg-[#d6d6d6]" />
      <div className="flex h-[29px] border-b border-[#a0a0a0] bg-[#f0f0f0]">
        <div role="toolbar" aria-label="标准" className="flex border-r border-[#a0a0a0] bg-gradient-to-b from-[#f4f4f4] to-[#d2d2d2]">
          <div className="w-[7px] py-1 pl-0.5"><div className="size-full bg-[radial-gradient(#b0b0b0_1px,transparent_1px)] bg-size-[4px_4px]" /></div>
          {topTools.map((t) => <ToolButton key={t.name} tool={t} />)}
        </div>
      </div>
      <div className="flex min-h-0 flex-1 border-b border-[#a0a0a0]">
        <div className="flex w-[59px] shrink-0 items-start">
          <Column tools={leftA} label="主要 1" />
          <Column tools={leftB} label="主要 2" />
        </div>
        <Viewports />
        <Properties />
        <Layers />
      </div>
      <SnapBar />
      <StatusBar />

      <svg viewBox="0 0 20 66" className="absolute top-[708px] right-0 h-[66px] w-5" aria-hidden="true">
        <circle cx="33" cy="33" r="32" fill="#2a2110" /><circle cx="33" cy="33" r="30" fill="none" stroke="#c9a04a" strokeWidth="3" /><circle cx="33" cy="33" r="27" fill="url(#orb)" stroke="#160d33" strokeWidth="2" />
      </svg>
      <a href="#xuexiniu" className="absolute right-[34px] bottom-[34px] flex h-[42px] w-[98px] items-center gap-0.5 rounded bg-white/30 pl-1.5 shadow-sm">
        <span className="flex w-[65px] flex-col items-center">
          <span className="font-['Liberation_Serif','Noto_Sans_CJK_SC'] text-[21px] leading-[22px] font-black whitespace-nowrap">学犀牛</span>
          <span className="font-['Open_Sans'] text-[10px] leading-3 font-semibold">xuexiniu.com</span>
        </span>
        <span className="flex h-[30px] w-[19px] flex-col items-center bg-[#d0384c] text-[9px] leading-[10px] font-bold text-white"><span>中</span><span>文</span><span>网</span></span>
      </a>
    </div>
  );
}
